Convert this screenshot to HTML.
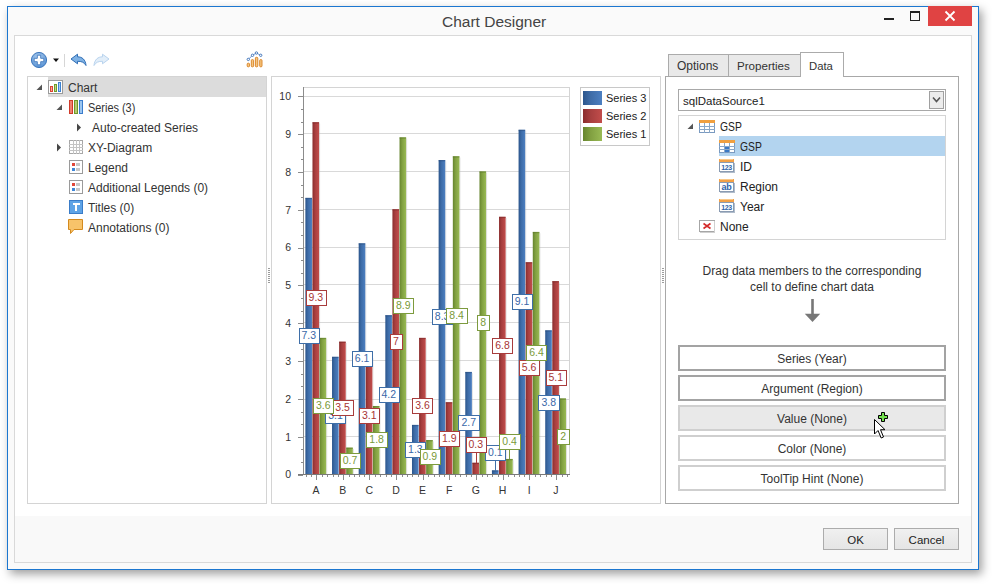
<!DOCTYPE html><html><head><meta charset="utf-8"><style>
*{box-sizing:border-box}
html,body{margin:0;padding:0;background:#fff;width:992px;height:584px;overflow:hidden;position:relative;font-family:"Liberation Sans",sans-serif;color:#333;font-size:12px}
.a{position:absolute}
.win{position:absolute;left:7px;top:6px;width:972px;height:564px;border:1px solid #1c77d0;background:#fafafa;box-shadow:3px 4px 9px rgba(0,0,0,0.38)}
.inner{position:absolute;left:14px;top:35px;width:958px;height:528px;border:1px solid #d9d9d9;background:#fff}
.t{position:absolute;white-space:nowrap;line-height:14px}
.lb{position:absolute;height:16px;border:1px solid;background:#fff;font-size:10.5px;line-height:12.5px;padding-left:2px;white-space:nowrap}
.ax{position:absolute;font-size:10.5px;line-height:14px;color:#333}
.btn{position:absolute;left:678px;width:268px;height:26px;border:2px solid #a3a3a3;background:#fff;text-align:center;line-height:24px;font-size:12px;color:#333}
</style></head><body><div class="win"></div>
<div class="inner"></div>
<div class="a" style="left:15px;top:516px;width:956px;height:46px;background:#f9f9f9"></div>
<div class="t" style="left:442px;top:13px;font-size:15.5px;line-height:18px;color:#444">Chart Designer</div>
<div class="a" style="left:884px;top:18px;width:10px;height:2px;background:#222"></div>
<div class="a" style="left:910px;top:11px;width:10px;height:10px;border:1px solid #222;border-top:2px solid #222"></div>
<div class="a" style="left:928px;top:6px;width:44px;height:20px;background:#e04343"></div>
<svg class="a" style="left:928px;top:6px" width="44" height="20"><path d="M17.5 5.5 L26.5 14.5 M26.5 5.5 L17.5 14.5" stroke="#fff" stroke-width="1.8"/></svg>
<div class="a" style="left:27px;top:76px;width:240px;height:428px;border:1px solid #d4d4d4;background:#fff"></div>
<div class="a" style="left:271px;top:76px;width:390px;height:428px;border:1px solid #d4d4d4;background:#fff"></div>
<div class="a" style="left:665px;top:76px;width:294px;height:428px;border:1px solid #a8a8a8;background:#fff"></div>
<svg class="a" style="left:30px;top:51px" width="18" height="18" shape-rendering="auto"><defs><radialGradient id="pc" cx="0.45" cy="0.35" r="0.7"><stop offset="0" stop-color="#b6d3f2"/><stop offset="1" stop-color="#4d8bd0"/></radialGradient></defs><circle cx="9" cy="9" r="7.6" fill="url(#pc)" stroke="#3f78bd" stroke-width="1"/><path d="M7.3 4.2h3.4v3.1h3.1v3.4h-3.1v3.1H7.3v-3.1H4.2V7.3h3.1z" fill="#fff" stroke="#3f78bd" stroke-width="0.9"/></svg>
<svg class="a" style="left:52px;top:57px" width="8" height="6"><path d="M1 1.5h6l-3 3.5z" fill="#111"/></svg>
<div class="a" style="left:64px;top:54px;width:1px;height:13px;background:#d6d6d6"></div>
<svg class="a" style="left:70px;top:53px" width="18" height="14" shape-rendering="auto"><path d="M1 6 L7.5 1.2 L7.5 3.8 C12 3.8 15.5 6.5 16 12.5 C14.2 9.3 11.5 8.2 7.5 8.3 L7.5 10.8 Z" fill="#7fb2e5" stroke="#2e6db5" stroke-width="1" stroke-linejoin="round"/></svg>
<svg class="a" style="left:92px;top:53px" width="18" height="14" shape-rendering="auto"><path d="M17 6 L10.5 1.2 L10.5 3.8 C6 3.8 2.5 6.5 2 12.5 C3.8 9.3 6.5 8.2 10.5 8.3 L10.5 10.8 Z" fill="#e2eef9" stroke="#b8d3ee" stroke-width="1" stroke-linejoin="round"/></svg>
<svg class="a" style="left:246px;top:51px" width="18" height="18" shape-rendering="auto"><g fill="#f6c680" stroke="#d77f1f" stroke-width="0.9"><rect x="1.2" y="12.2" width="2.3" height="3.6" rx="0.9"/><rect x="5.3" y="8.6" width="2.3" height="7.2" rx="0.9"/><rect x="9.4" y="6.3" width="2.4" height="9.5" rx="0.9"/><rect x="13.7" y="8.6" width="2.3" height="7.2" rx="0.9"/></g><path d="M2.3 8.4 L6.5 4.3 L10.4 2 L14.7 4.3" fill="none" stroke="#4b7cc2" stroke-width="0.8"/><g fill="#fff" stroke="#3a6fb8" stroke-width="0.9"><circle cx="2.3" cy="8.4" r="1.2"/><circle cx="6.5" cy="4.3" r="1.2"/><circle cx="10.4" cy="2" r="1.2"/><circle cx="14.7" cy="4.3" r="1.2"/></g></svg>
<div class="a" style="left:48px;top:77px;width:218px;height:20px;background:#dcdcdc"></div>
<svg class="a" style="left:36px;top:84px" width="7" height="7"><path d="M6 0.5 L6 6 L0.5 6 Z" fill="#555"/></svg>
<svg class="a" style="left:56px;top:104px" width="7" height="7"><path d="M6 0.5 L6 6 L0.5 6 Z" fill="#555"/></svg>
<svg class="a" style="left:76px;top:123px" width="6" height="9"><path d="M1 0.5 L5 4.5 L1 8.5 Z" fill="#444"/></svg>
<svg class="a" style="left:56px;top:143px" width="6" height="9"><path d="M1 0.5 L5 4.5 L1 8.5 Z" fill="#444"/></svg>
<svg class="a" style="left:48px;top:80px" width="15" height="14" shape-rendering="crispEdges"><rect x="0.5" y="0.5" width="14" height="13" fill="#fff" stroke="#9a9a9a"/><rect x="2.5" y="6.5" width="2" height="5" fill="#f3a99c" stroke="#dd4431"/><rect x="6.5" y="4.5" width="2" height="7" fill="#c4d48a" stroke="#6e9c2c"/><rect x="10.5" y="2.5" width="2" height="9" fill="#a9cdf2" stroke="#3c82d2"/></svg>
<svg class="a" style="left:69px;top:100px" width="15" height="14" shape-rendering="crispEdges"><rect x="0.5" y="0.5" width="3" height="13" fill="#f08070" stroke="#d03a2a"/><rect x="5.5" y="0.5" width="3" height="13" fill="#b8c870" stroke="#6f9a2a"/><rect x="10.5" y="0.5" width="3" height="13" fill="#9cc6f0" stroke="#3a7ccc"/></svg>
<svg class="a" style="left:69px;top:140px" width="14" height="14" shape-rendering="crispEdges"><rect x="0.5" y="0.5" width="13" height="13" fill="#fff" stroke="#a8a8a8"/><path d="M0 4.5H14M0 7.5H14M0 10.5H14M4.5 0V14M7.5 0V14M10.5 0V14" stroke="#c4c4c4"/></svg>
<svg class="a" style="left:69px;top:160px" width="14" height="14" shape-rendering="crispEdges"><rect x="0.5" y="0.5" width="13" height="13" fill="#fff" stroke="#9a9a9a"/><rect x="3" y="3" width="3" height="3" fill="#e0473a"/><rect x="3" y="8" width="3" height="3" fill="#3f86d6"/><rect x="7" y="3" width="4" height="3" fill="#c8c8c8"/><rect x="7" y="8" width="4" height="3" fill="#c8c8c8"/></svg>
<svg class="a" style="left:69px;top:180px" width="14" height="14" shape-rendering="crispEdges"><rect x="0.5" y="0.5" width="13" height="13" fill="#fff" stroke="#9a9a9a"/><rect x="3" y="3" width="3" height="3" fill="#e0473a"/><rect x="3" y="8" width="3" height="3" fill="#3f86d6"/><rect x="7" y="3" width="4" height="3" fill="#c8c8c8"/><rect x="7" y="8" width="4" height="3" fill="#c8c8c8"/></svg>
<svg class="a" style="left:69px;top:200px" width="14" height="14" shape-rendering="crispEdges"><rect x="0.5" y="0.5" width="13" height="13" fill="#5ea3e6" stroke="#3a7cc8"/><path d="M3.5 3.5H10.5M7 3.5V11" stroke="#fff" stroke-width="2"/></svg>
<svg class="a" style="left:68px;top:219px" width="16" height="16" shape-rendering="auto"><path d="M0.5 0.5H14.5V10.5H6L2.5 14.5V10.5H0.5Z" fill="#f7c36a" stroke="#d48a1e" stroke-linejoin="round"/></svg>
<div class="t" style="left:68px;top:80px;font-size:12px;line-height:16px;color:#333">Chart</div>
<div class="t" style="left:88px;top:100px;font-size:12px;line-height:16px;color:#333;transform:scaleX(0.91);transform-origin:0 0">Series (3)</div>
<div class="t" style="left:92px;top:120px;font-size:12px;line-height:16px;color:#333">Auto-created Series</div>
<div class="t" style="left:88px;top:140px;font-size:12px;line-height:16px;color:#333">XY-Diagram</div>
<div class="t" style="left:88px;top:160px;font-size:12px;line-height:16px;color:#333">Legend</div>
<div class="t" style="left:88px;top:180px;font-size:12px;line-height:16px;color:#333">Additional Legends (0)</div>
<div class="t" style="left:88px;top:200px;font-size:12px;line-height:16px;color:#333">Titles (0)</div>
<div class="t" style="left:88px;top:220px;font-size:12px;line-height:16px;color:#333">Annotations (0)</div>
<svg class="a" style="left:268px;top:268px" width="3" height="16" shape-rendering="crispEdges"><rect x="0" y="0" width="2" height="1" fill="#9c9c9c"/><rect x="0" y="2" width="2" height="1" fill="#9c9c9c"/><rect x="0" y="4" width="2" height="1" fill="#9c9c9c"/><rect x="0" y="6" width="2" height="1" fill="#9c9c9c"/><rect x="0" y="8" width="2" height="1" fill="#9c9c9c"/><rect x="0" y="10" width="2" height="1" fill="#9c9c9c"/><rect x="0" y="12" width="2" height="1" fill="#9c9c9c"/><rect x="0" y="14" width="2" height="1" fill="#9c9c9c"/></svg>
<svg class="a" style="left:662px;top:268px" width="3" height="16" shape-rendering="crispEdges"><rect x="0" y="0" width="2" height="1" fill="#9c9c9c"/><rect x="0" y="2" width="2" height="1" fill="#9c9c9c"/><rect x="0" y="4" width="2" height="1" fill="#9c9c9c"/><rect x="0" y="6" width="2" height="1" fill="#9c9c9c"/><rect x="0" y="8" width="2" height="1" fill="#9c9c9c"/><rect x="0" y="10" width="2" height="1" fill="#9c9c9c"/><rect x="0" y="12" width="2" height="1" fill="#9c9c9c"/><rect x="0" y="14" width="2" height="1" fill="#9c9c9c"/></svg>
<div class="a" style="left:580px;top:87px;width:70px;height:59px;border:1px solid #c8c8c8;background:#fff"></div>
<svg class="a" style="left:583px;top:91px" width="19" height="14"><rect x="0" y="0" width="19" height="14" fill="url(#gb)"/></svg>
<div class="t" style="left:606px;top:91px;font-size:11px;line-height:14px;color:#222">Series 3</div>
<svg class="a" style="left:583px;top:109px" width="19" height="14"><rect x="0" y="0" width="19" height="14" fill="url(#gr)"/></svg>
<div class="t" style="left:606px;top:109px;font-size:11px;line-height:14px;color:#222">Series 2</div>
<svg class="a" style="left:583px;top:127px" width="19" height="14"><rect x="0" y="0" width="19" height="14" fill="url(#gg)"/></svg>
<div class="t" style="left:606px;top:127px;font-size:11px;line-height:14px;color:#222">Series 1</div>
<div class="a" style="left:668px;top:54px;width:61px;height:22px;border:1px solid #ababab;border-bottom:none;background:#e9e9e9"></div>
<div class="a" style="left:728px;top:54px;width:73px;height:22px;border:1px solid #ababab;border-bottom:none;background:#e9e9e9"></div>
<div class="a" style="left:800px;top:52px;width:44px;height:25px;border:1px solid #ababab;border-bottom:none;background:#fff"></div>
<div class="t" style="left:677px;top:58px;font-size:12px;line-height:16px">Options</div>
<div class="t" style="left:737px;top:58px;font-size:11.6px;line-height:16px">Properties</div>
<div class="t" style="left:809px;top:58px;font-size:11.3px;line-height:16px">Data</div>
<div class="a" style="left:678px;top:89px;width:268px;height:22px;border:1px solid #a8a8a8;background:#fff"></div>
<div class="t" style="left:683px;top:93px;font-size:11.5px;line-height:16px;color:#222">sqlDataSource1</div>
<div class="a" style="left:929px;top:91px;width:15px;height:18px;border:1px solid #a0a0a0;background:#ececec"></div>
<svg class="a" style="left:932px;top:96px" width="9" height="8" shape-rendering="auto"><path d="M1 1.5 L4.5 5.5 L8 1.5" fill="none" stroke="#555" stroke-width="1.6"/></svg>
<div class="a" style="left:678px;top:115px;width:268px;height:125px;border:1px solid #d4d4d4;background:#fff"></div>
<div class="a" style="left:719px;top:136px;width:226px;height:20px;background:#b3d4ef"></div>
<svg class="a" style="left:687px;top:123px" width="7" height="7"><path d="M6 0.5 L6 6 L0.5 6 Z" fill="#555"/></svg>
<svg class="a" style="left:699px;top:120px" width="16" height="13" shape-rendering="crispEdges"><rect x="0.5" y="0.5" width="15" height="12" fill="#fff" stroke="#7a9ac0"/><rect x="0" y="0" width="16" height="3" fill="#f0a040"/><path d="M0 6.5H16M0 9.5H16M5.5 3V13M10.5 3V13" stroke="#8aa8c8"/></svg>
<svg class="a" style="left:719px;top:140px" width="16" height="13" shape-rendering="crispEdges"><rect x="0.5" y="0.5" width="15" height="12" fill="#fff" stroke="#7a9ac0"/><rect x="0" y="0" width="16" height="3" fill="#f0a040"/><path d="M0 6.5H16M0 9.5H16M5.5 3V13M10.5 3V13" stroke="#8aa8c8"/><rect x="6" y="7" width="4" height="2" fill="#3a78c4"/><rect x="6" y="10" width="4" height="2" fill="#3a78c4"/></svg>
<svg class="a" style="left:719px;top:159px" width="16" height="14" shape-rendering="crispEdges"><rect x="0.5" y="3.5" width="14" height="9" fill="#fff" stroke="#8a9bb2"/><path d="M1 13.5H16M15.5 4V14" stroke="#b0bccb"/><rect x="0" y="0" width="15" height="3" fill="#f3a146"/><rect x="1" y="0" width="13" height="1" fill="#f9c98a"/><text x="7.5" y="11.2" font-family="Liberation Sans" font-weight="bold" font-size="7" letter-spacing="-0.4" text-anchor="middle" fill="#2e64ab" shape-rendering="auto">123</text></svg>
<svg class="a" style="left:719px;top:179px" width="16" height="14" shape-rendering="crispEdges"><rect x="0.5" y="3.5" width="14" height="9" fill="#fff" stroke="#8a9bb2"/><path d="M1 13.5H16M15.5 4V14" stroke="#b0bccb"/><rect x="0" y="0" width="15" height="3" fill="#f3a146"/><rect x="1" y="0" width="13" height="1" fill="#f9c98a"/><text x="7.5" y="11.2" font-family="Liberation Sans" font-weight="bold" font-size="9" letter-spacing="-0.2" text-anchor="middle" fill="#2e64ab" shape-rendering="auto">ab</text></svg>
<svg class="a" style="left:719px;top:199px" width="16" height="14" shape-rendering="crispEdges"><rect x="0.5" y="3.5" width="14" height="9" fill="#fff" stroke="#8a9bb2"/><path d="M1 13.5H16M15.5 4V14" stroke="#b0bccb"/><rect x="0" y="0" width="15" height="3" fill="#f3a146"/><rect x="1" y="0" width="13" height="1" fill="#f9c98a"/><text x="7.5" y="11.2" font-family="Liberation Sans" font-weight="bold" font-size="7" letter-spacing="-0.4" text-anchor="middle" fill="#2e64ab" shape-rendering="auto">123</text></svg>
<svg class="a" style="left:699px;top:220px" width="16" height="13" shape-rendering="crispEdges"><rect x="0.5" y="0.5" width="15" height="11" fill="#fff" stroke="#a6a6a6"/><path d="M1 12.5H16M15.5 1V13" stroke="#d0d0d0"/><path d="M4.5 3.5 L11.5 8.5 M11.5 3.5 L4.5 8.5" stroke="#d42a2a" stroke-width="1.6" shape-rendering="auto"/></svg>
<div class="t" style="left:740px;top:159px;font-size:12px;line-height:16px;color:#222">ID</div>
<div class="t" style="left:740px;top:179px;font-size:12px;line-height:16px;color:#222">Region</div>
<div class="t" style="left:740px;top:199px;font-size:12px;line-height:16px;color:#222">Year</div>
<div class="t" style="left:720px;top:219px;font-size:12px;line-height:16px;color:#222">None</div>
<div class="t" style="left:720px;top:119px;font-size:12px;line-height:16px;color:#222;transform:scaleX(0.86);transform-origin:0 0">GSP</div>
<div class="t" style="left:740px;top:139px;font-size:12px;line-height:16px;color:#222;transform:scaleX(0.86);transform-origin:0 0">GSP</div>
<div class="t" style="left:678px;top:263px;width:268px;text-align:center;font-size:12px;line-height:16px;color:#333">Drag data members to the corresponding<br>cell to define chart data</div>
<svg class="a" style="left:804px;top:299px" width="17" height="24" shape-rendering="auto"><path d="M8.5 0 V16" stroke="#777" stroke-width="2.6"/><path d="M0.8 14.8 L16.2 14.8 L8.5 23 Z" fill="#777"/></svg>
<div class="btn" style="top:345px;border-color:#a3a3a3;background:#fff">Series (Year)</div>
<div class="btn" style="top:375px;border-color:#a3a3a3;background:#fff">Argument (Region)</div>
<div class="btn" style="top:405px;border-color:#cfcfcf;background:#e9e9e9">Value (None)</div>
<div class="btn" style="top:435px;border-color:#cfcfcf;background:#fff">Color (None)</div>
<div class="btn" style="top:465px;border-color:#cfcfcf;background:#fff">ToolTip Hint (None)</div>
<svg class="a" style="left:872px;top:410px" width="20" height="30" shape-rendering="auto"><path d="M2.5 9.5 L2.5 24 L6 20.5 L9.2 28 L11.5 27 L8.5 19.7 L13 19.7 Z" fill="#fff" stroke="#000" stroke-width="1" stroke-linejoin="miter"/><path d="M9.5 2.5 H12.5 V5.5 H15.5 V8.5 H12.5 V11.5 H9.5 V8.5 H6.5 V5.5 H9.5 Z" fill="#74e050" stroke="#000" stroke-width="1"/></svg>
<div class="a" style="left:823px;top:528px;width:65px;height:22px;border:1px solid #acacac;background:linear-gradient(#f0f0f0,#e5e5e5);text-align:center;line-height:22px;font-size:11.5px;color:#222">OK</div>
<div class="a" style="left:894px;top:528px;width:65px;height:22px;border:1px solid #acacac;background:linear-gradient(#f0f0f0,#e5e5e5);text-align:center;line-height:22px;font-size:11.5px;color:#222">Cancel</div><svg style="position:absolute;left:0;top:0" width="992" height="584" viewBox="0 0 992 584" shape-rendering="crispEdges">
<defs>
<linearGradient id="gb" x1="0" x2="1" y1="0" y2="0"><stop offset="0" stop-color="#2b558c"/><stop offset="0.4" stop-color="#3e6ca7"/><stop offset="1" stop-color="#4c7fc1"/></linearGradient>
<linearGradient id="gr" x1="0" x2="1" y1="0" y2="0"><stop offset="0" stop-color="#8a2d2d"/><stop offset="0.4" stop-color="#a73f3f"/><stop offset="1" stop-color="#c24d4b"/></linearGradient>
<linearGradient id="gg" x1="0" x2="1" y1="0" y2="0"><stop offset="0" stop-color="#66852e"/><stop offset="0.4" stop-color="#81a041"/><stop offset="1" stop-color="#99ba54"/></linearGradient>
</defs>
<line x1="304.2" x2="569.7" y1="436.5" y2="436.5" stroke="#d9d9d9" stroke-width="1"/>
<line x1="304.2" x2="569.7" y1="399.5" y2="399.5" stroke="#d9d9d9" stroke-width="1"/>
<line x1="304.2" x2="569.7" y1="360.5" y2="360.5" stroke="#d9d9d9" stroke-width="1"/>
<line x1="304.2" x2="569.7" y1="322.5" y2="322.5" stroke="#d9d9d9" stroke-width="1"/>
<line x1="304.2" x2="569.7" y1="284.5" y2="284.5" stroke="#d9d9d9" stroke-width="1"/>
<line x1="304.2" x2="569.7" y1="247.5" y2="247.5" stroke="#d9d9d9" stroke-width="1"/>
<line x1="304.2" x2="569.7" y1="209.5" y2="209.5" stroke="#d9d9d9" stroke-width="1"/>
<line x1="304.2" x2="569.7" y1="171.5" y2="171.5" stroke="#d9d9d9" stroke-width="1"/>
<line x1="304.2" x2="569.7" y1="133.5" y2="133.5" stroke="#d9d9d9" stroke-width="1"/>
<line x1="304.2" x2="569.7" y1="96.5" y2="96.5" stroke="#d9d9d9" stroke-width="1"/>
<line x1="303.2" x2="570.2" y1="87.5" y2="87.5" stroke="#d4d4d4"/>
<line x1="569.5" x2="569.5" y1="87" y2="474.4" stroke="#d4d4d4"/>
<rect x="311.98" y="199.17" width="1" height="275.23" fill="#bdbdbd" opacity="0.45" shape-rendering="auto"/>
<rect x="305.38" y="197.87" width="6.6" height="276.53" fill="url(#gb)" shape-rendering="auto"/>
<rect x="305.38" y="197.87" width="6.6" height="1.3" fill="#2a4f80" opacity="0.55" shape-rendering="auto"/>
<rect x="319.08" y="123.49" width="1" height="350.91" fill="#bdbdbd" opacity="0.45" shape-rendering="auto"/>
<rect x="312.48" y="122.19" width="6.6" height="352.21" fill="url(#gr)" shape-rendering="auto"/>
<rect x="312.48" y="122.19" width="6.6" height="1.3" fill="#7c2828" opacity="0.55" shape-rendering="auto"/>
<rect x="326.18" y="339.18" width="1" height="135.22" fill="#bdbdbd" opacity="0.45" shape-rendering="auto"/>
<rect x="319.57" y="337.88" width="6.6" height="136.52" fill="url(#gg)" shape-rendering="auto"/>
<rect x="319.57" y="337.88" width="6.6" height="1.3" fill="#5c7a2a" opacity="0.55" shape-rendering="auto"/>
<rect x="338.63" y="358.10" width="1" height="116.30" fill="#bdbdbd" opacity="0.45" shape-rendering="auto"/>
<rect x="332.03" y="356.80" width="6.6" height="117.60" fill="url(#gb)" shape-rendering="auto"/>
<rect x="332.03" y="356.80" width="6.6" height="1.3" fill="#2a4f80" opacity="0.55" shape-rendering="auto"/>
<rect x="345.73" y="342.96" width="1" height="131.44" fill="#bdbdbd" opacity="0.45" shape-rendering="auto"/>
<rect x="339.13" y="341.66" width="6.6" height="132.74" fill="url(#gr)" shape-rendering="auto"/>
<rect x="339.13" y="341.66" width="6.6" height="1.3" fill="#7c2828" opacity="0.55" shape-rendering="auto"/>
<rect x="352.83" y="448.91" width="1" height="25.49" fill="#bdbdbd" opacity="0.45" shape-rendering="auto"/>
<rect x="346.23" y="447.61" width="6.6" height="26.79" fill="url(#gg)" shape-rendering="auto"/>
<rect x="346.23" y="447.61" width="6.6" height="1.3" fill="#5c7a2a" opacity="0.55" shape-rendering="auto"/>
<rect x="365.28" y="244.58" width="1" height="229.82" fill="#bdbdbd" opacity="0.45" shape-rendering="auto"/>
<rect x="358.68" y="243.28" width="6.6" height="231.12" fill="url(#gb)" shape-rendering="auto"/>
<rect x="358.68" y="243.28" width="6.6" height="1.3" fill="#2a4f80" opacity="0.55" shape-rendering="auto"/>
<rect x="372.38" y="358.10" width="1" height="116.30" fill="#bdbdbd" opacity="0.45" shape-rendering="auto"/>
<rect x="365.78" y="356.80" width="6.6" height="117.60" fill="url(#gr)" shape-rendering="auto"/>
<rect x="365.78" y="356.80" width="6.6" height="1.3" fill="#7c2828" opacity="0.55" shape-rendering="auto"/>
<rect x="379.48" y="407.29" width="1" height="67.11" fill="#bdbdbd" opacity="0.45" shape-rendering="auto"/>
<rect x="372.88" y="405.99" width="6.6" height="68.41" fill="url(#gg)" shape-rendering="auto"/>
<rect x="372.88" y="405.99" width="6.6" height="1.3" fill="#5c7a2a" opacity="0.55" shape-rendering="auto"/>
<rect x="391.93" y="316.47" width="1" height="157.93" fill="#bdbdbd" opacity="0.45" shape-rendering="auto"/>
<rect x="385.33" y="315.17" width="6.6" height="159.23" fill="url(#gb)" shape-rendering="auto"/>
<rect x="385.33" y="315.17" width="6.6" height="1.3" fill="#2a4f80" opacity="0.55" shape-rendering="auto"/>
<rect x="399.03" y="210.52" width="1" height="263.88" fill="#bdbdbd" opacity="0.45" shape-rendering="auto"/>
<rect x="392.43" y="209.22" width="6.6" height="265.18" fill="url(#gr)" shape-rendering="auto"/>
<rect x="392.43" y="209.22" width="6.6" height="1.3" fill="#7c2828" opacity="0.55" shape-rendering="auto"/>
<rect x="406.13" y="138.62" width="1" height="335.78" fill="#bdbdbd" opacity="0.45" shape-rendering="auto"/>
<rect x="399.53" y="137.32" width="6.6" height="337.08" fill="url(#gg)" shape-rendering="auto"/>
<rect x="399.53" y="137.32" width="6.6" height="1.3" fill="#5c7a2a" opacity="0.55" shape-rendering="auto"/>
<rect x="418.58" y="426.21" width="1" height="48.19" fill="#bdbdbd" opacity="0.45" shape-rendering="auto"/>
<rect x="411.98" y="424.91" width="6.6" height="49.49" fill="url(#gb)" shape-rendering="auto"/>
<rect x="411.98" y="424.91" width="6.6" height="1.3" fill="#2a4f80" opacity="0.55" shape-rendering="auto"/>
<rect x="425.68" y="339.18" width="1" height="135.22" fill="#bdbdbd" opacity="0.45" shape-rendering="auto"/>
<rect x="419.08" y="337.88" width="6.6" height="136.52" fill="url(#gr)" shape-rendering="auto"/>
<rect x="419.08" y="337.88" width="6.6" height="1.3" fill="#7c2828" opacity="0.55" shape-rendering="auto"/>
<rect x="432.78" y="441.34" width="1" height="33.06" fill="#bdbdbd" opacity="0.45" shape-rendering="auto"/>
<rect x="426.18" y="440.04" width="6.6" height="34.36" fill="url(#gg)" shape-rendering="auto"/>
<rect x="426.18" y="440.04" width="6.6" height="1.3" fill="#5c7a2a" opacity="0.55" shape-rendering="auto"/>
<rect x="445.23" y="161.33" width="1" height="313.07" fill="#bdbdbd" opacity="0.45" shape-rendering="auto"/>
<rect x="438.63" y="160.03" width="6.6" height="314.37" fill="url(#gb)" shape-rendering="auto"/>
<rect x="438.63" y="160.03" width="6.6" height="1.3" fill="#2a4f80" opacity="0.55" shape-rendering="auto"/>
<rect x="452.33" y="403.50" width="1" height="70.90" fill="#bdbdbd" opacity="0.45" shape-rendering="auto"/>
<rect x="445.73" y="402.20" width="6.6" height="72.20" fill="url(#gr)" shape-rendering="auto"/>
<rect x="445.73" y="402.20" width="6.6" height="1.3" fill="#7c2828" opacity="0.55" shape-rendering="auto"/>
<rect x="459.43" y="157.54" width="1" height="316.86" fill="#bdbdbd" opacity="0.45" shape-rendering="auto"/>
<rect x="452.83" y="156.24" width="6.6" height="318.16" fill="url(#gg)" shape-rendering="auto"/>
<rect x="452.83" y="156.24" width="6.6" height="1.3" fill="#5c7a2a" opacity="0.55" shape-rendering="auto"/>
<rect x="471.88" y="373.23" width="1" height="101.17" fill="#bdbdbd" opacity="0.45" shape-rendering="auto"/>
<rect x="465.28" y="371.93" width="6.6" height="102.47" fill="url(#gb)" shape-rendering="auto"/>
<rect x="465.28" y="371.93" width="6.6" height="1.3" fill="#2a4f80" opacity="0.55" shape-rendering="auto"/>
<rect x="478.98" y="464.05" width="1" height="10.35" fill="#bdbdbd" opacity="0.45" shape-rendering="auto"/>
<rect x="472.38" y="462.75" width="6.6" height="11.65" fill="url(#gr)" shape-rendering="auto"/>
<rect x="472.38" y="462.75" width="6.6" height="1.3" fill="#7c2828" opacity="0.55" shape-rendering="auto"/>
<rect x="486.08" y="172.68" width="1" height="301.72" fill="#bdbdbd" opacity="0.45" shape-rendering="auto"/>
<rect x="479.48" y="171.38" width="6.6" height="303.02" fill="url(#gg)" shape-rendering="auto"/>
<rect x="479.48" y="171.38" width="6.6" height="1.3" fill="#5c7a2a" opacity="0.55" shape-rendering="auto"/>
<rect x="498.53" y="471.62" width="1" height="2.78" fill="#bdbdbd" opacity="0.45" shape-rendering="auto"/>
<rect x="491.93" y="470.32" width="6.6" height="4.08" fill="url(#gb)" shape-rendering="auto"/>
<rect x="491.93" y="470.32" width="6.6" height="1.3" fill="#2a4f80" opacity="0.55" shape-rendering="auto"/>
<rect x="505.63" y="218.09" width="1" height="256.31" fill="#bdbdbd" opacity="0.45" shape-rendering="auto"/>
<rect x="499.03" y="216.79" width="6.6" height="257.61" fill="url(#gr)" shape-rendering="auto"/>
<rect x="499.03" y="216.79" width="6.6" height="1.3" fill="#7c2828" opacity="0.55" shape-rendering="auto"/>
<rect x="512.73" y="460.26" width="1" height="14.14" fill="#bdbdbd" opacity="0.45" shape-rendering="auto"/>
<rect x="506.13" y="458.96" width="6.6" height="15.44" fill="url(#gg)" shape-rendering="auto"/>
<rect x="506.13" y="458.96" width="6.6" height="1.3" fill="#5c7a2a" opacity="0.55" shape-rendering="auto"/>
<rect x="525.18" y="131.06" width="1" height="343.34" fill="#bdbdbd" opacity="0.45" shape-rendering="auto"/>
<rect x="518.58" y="129.76" width="6.6" height="344.64" fill="url(#gb)" shape-rendering="auto"/>
<rect x="518.58" y="129.76" width="6.6" height="1.3" fill="#2a4f80" opacity="0.55" shape-rendering="auto"/>
<rect x="532.28" y="263.50" width="1" height="210.90" fill="#bdbdbd" opacity="0.45" shape-rendering="auto"/>
<rect x="525.68" y="262.20" width="6.6" height="212.20" fill="url(#gr)" shape-rendering="auto"/>
<rect x="525.68" y="262.20" width="6.6" height="1.3" fill="#7c2828" opacity="0.55" shape-rendering="auto"/>
<rect x="539.38" y="233.22" width="1" height="241.18" fill="#bdbdbd" opacity="0.45" shape-rendering="auto"/>
<rect x="532.78" y="231.92" width="6.6" height="242.48" fill="url(#gg)" shape-rendering="auto"/>
<rect x="532.78" y="231.92" width="6.6" height="1.3" fill="#5c7a2a" opacity="0.55" shape-rendering="auto"/>
<rect x="551.83" y="331.61" width="1" height="142.79" fill="#bdbdbd" opacity="0.45" shape-rendering="auto"/>
<rect x="545.23" y="330.31" width="6.6" height="144.09" fill="url(#gb)" shape-rendering="auto"/>
<rect x="545.23" y="330.31" width="6.6" height="1.3" fill="#2a4f80" opacity="0.55" shape-rendering="auto"/>
<rect x="558.93" y="282.42" width="1" height="191.98" fill="#bdbdbd" opacity="0.45" shape-rendering="auto"/>
<rect x="552.33" y="281.12" width="6.6" height="193.28" fill="url(#gr)" shape-rendering="auto"/>
<rect x="552.33" y="281.12" width="6.6" height="1.3" fill="#7c2828" opacity="0.55" shape-rendering="auto"/>
<rect x="566.03" y="399.72" width="1" height="74.68" fill="#bdbdbd" opacity="0.45" shape-rendering="auto"/>
<rect x="559.43" y="398.42" width="6.6" height="75.98" fill="url(#gg)" shape-rendering="auto"/>
<rect x="559.43" y="398.42" width="6.6" height="1.3" fill="#5c7a2a" opacity="0.55" shape-rendering="auto"/>
<line x1="303.5" x2="303.5" y1="87" y2="475" stroke="#8c8c8c"/>
<line x1="298" x2="570" y1="474.5" y2="474.5" stroke="#7a7a7a"/>
<line x1="298" x2="303" y1="475.5" y2="475.5" stroke="#8c8c8c"/>
<line x1="301" x2="303" y1="462.5" y2="462.5" stroke="#8c8c8c"/>
<line x1="301" x2="303" y1="449.5" y2="449.5" stroke="#8c8c8c"/>
<line x1="298" x2="303" y1="437.5" y2="437.5" stroke="#8c8c8c"/>
<line x1="301" x2="303" y1="424.5" y2="424.5" stroke="#8c8c8c"/>
<line x1="301" x2="303" y1="412.5" y2="412.5" stroke="#8c8c8c"/>
<line x1="298" x2="303" y1="399.5" y2="399.5" stroke="#8c8c8c"/>
<line x1="301" x2="303" y1="386.5" y2="386.5" stroke="#8c8c8c"/>
<line x1="301" x2="303" y1="374.5" y2="374.5" stroke="#8c8c8c"/>
<line x1="298" x2="303" y1="361.5" y2="361.5" stroke="#8c8c8c"/>
<line x1="301" x2="303" y1="349.5" y2="349.5" stroke="#8c8c8c"/>
<line x1="301" x2="303" y1="336.5" y2="336.5" stroke="#8c8c8c"/>
<line x1="298" x2="303" y1="323.5" y2="323.5" stroke="#8c8c8c"/>
<line x1="301" x2="303" y1="311.5" y2="311.5" stroke="#8c8c8c"/>
<line x1="301" x2="303" y1="298.5" y2="298.5" stroke="#8c8c8c"/>
<line x1="298" x2="303" y1="285.5" y2="285.5" stroke="#8c8c8c"/>
<line x1="301" x2="303" y1="273.5" y2="273.5" stroke="#8c8c8c"/>
<line x1="301" x2="303" y1="260.5" y2="260.5" stroke="#8c8c8c"/>
<line x1="298" x2="303" y1="248.5" y2="248.5" stroke="#8c8c8c"/>
<line x1="301" x2="303" y1="235.5" y2="235.5" stroke="#8c8c8c"/>
<line x1="301" x2="303" y1="222.5" y2="222.5" stroke="#8c8c8c"/>
<line x1="298" x2="303" y1="210.5" y2="210.5" stroke="#8c8c8c"/>
<line x1="301" x2="303" y1="197.5" y2="197.5" stroke="#8c8c8c"/>
<line x1="301" x2="303" y1="185.5" y2="185.5" stroke="#8c8c8c"/>
<line x1="298" x2="303" y1="172.5" y2="172.5" stroke="#8c8c8c"/>
<line x1="301" x2="303" y1="159.5" y2="159.5" stroke="#8c8c8c"/>
<line x1="301" x2="303" y1="147.5" y2="147.5" stroke="#8c8c8c"/>
<line x1="298" x2="303" y1="134.5" y2="134.5" stroke="#8c8c8c"/>
<line x1="301" x2="303" y1="122.5" y2="122.5" stroke="#8c8c8c"/>
<line x1="301" x2="303" y1="109.5" y2="109.5" stroke="#8c8c8c"/>
<line x1="298" x2="303" y1="96.5" y2="96.5" stroke="#8c8c8c"/>
<line x1="316.5" x2="316.5" y1="475" y2="480" stroke="#8c8c8c"/>
<line x1="306.5" x2="306.5" y1="475" y2="477" stroke="#8c8c8c"/>
<line x1="311.5" x2="311.5" y1="475" y2="477" stroke="#8c8c8c"/>
<line x1="322.5" x2="322.5" y1="475" y2="477" stroke="#8c8c8c"/>
<line x1="327.5" x2="327.5" y1="475" y2="477" stroke="#8c8c8c"/>
<line x1="343.5" x2="343.5" y1="475" y2="480" stroke="#8c8c8c"/>
<line x1="333.5" x2="333.5" y1="475" y2="477" stroke="#8c8c8c"/>
<line x1="338.5" x2="338.5" y1="475" y2="477" stroke="#8c8c8c"/>
<line x1="349.5" x2="349.5" y1="475" y2="477" stroke="#8c8c8c"/>
<line x1="354.5" x2="354.5" y1="475" y2="477" stroke="#8c8c8c"/>
<line x1="369.5" x2="369.5" y1="475" y2="480" stroke="#8c8c8c"/>
<line x1="359.5" x2="359.5" y1="475" y2="477" stroke="#8c8c8c"/>
<line x1="364.5" x2="364.5" y1="475" y2="477" stroke="#8c8c8c"/>
<line x1="375.5" x2="375.5" y1="475" y2="477" stroke="#8c8c8c"/>
<line x1="380.5" x2="380.5" y1="475" y2="477" stroke="#8c8c8c"/>
<line x1="396.5" x2="396.5" y1="475" y2="480" stroke="#8c8c8c"/>
<line x1="386.5" x2="386.5" y1="475" y2="477" stroke="#8c8c8c"/>
<line x1="391.5" x2="391.5" y1="475" y2="477" stroke="#8c8c8c"/>
<line x1="402.5" x2="402.5" y1="475" y2="477" stroke="#8c8c8c"/>
<line x1="407.5" x2="407.5" y1="475" y2="477" stroke="#8c8c8c"/>
<line x1="423.5" x2="423.5" y1="475" y2="480" stroke="#8c8c8c"/>
<line x1="412.5" x2="412.5" y1="475" y2="477" stroke="#8c8c8c"/>
<line x1="418.5" x2="418.5" y1="475" y2="477" stroke="#8c8c8c"/>
<line x1="428.5" x2="428.5" y1="475" y2="477" stroke="#8c8c8c"/>
<line x1="434.5" x2="434.5" y1="475" y2="477" stroke="#8c8c8c"/>
<line x1="449.5" x2="449.5" y1="475" y2="480" stroke="#8c8c8c"/>
<line x1="439.5" x2="439.5" y1="475" y2="477" stroke="#8c8c8c"/>
<line x1="444.5" x2="444.5" y1="475" y2="477" stroke="#8c8c8c"/>
<line x1="455.5" x2="455.5" y1="475" y2="477" stroke="#8c8c8c"/>
<line x1="460.5" x2="460.5" y1="475" y2="477" stroke="#8c8c8c"/>
<line x1="476.5" x2="476.5" y1="475" y2="480" stroke="#8c8c8c"/>
<line x1="466.5" x2="466.5" y1="475" y2="477" stroke="#8c8c8c"/>
<line x1="471.5" x2="471.5" y1="475" y2="477" stroke="#8c8c8c"/>
<line x1="482.5" x2="482.5" y1="475" y2="477" stroke="#8c8c8c"/>
<line x1="487.5" x2="487.5" y1="475" y2="477" stroke="#8c8c8c"/>
<line x1="503.5" x2="503.5" y1="475" y2="480" stroke="#8c8c8c"/>
<line x1="492.5" x2="492.5" y1="475" y2="477" stroke="#8c8c8c"/>
<line x1="498.5" x2="498.5" y1="475" y2="477" stroke="#8c8c8c"/>
<line x1="508.5" x2="508.5" y1="475" y2="477" stroke="#8c8c8c"/>
<line x1="514.5" x2="514.5" y1="475" y2="477" stroke="#8c8c8c"/>
<line x1="529.5" x2="529.5" y1="475" y2="480" stroke="#8c8c8c"/>
<line x1="519.5" x2="519.5" y1="475" y2="477" stroke="#8c8c8c"/>
<line x1="524.5" x2="524.5" y1="475" y2="477" stroke="#8c8c8c"/>
<line x1="535.5" x2="535.5" y1="475" y2="477" stroke="#8c8c8c"/>
<line x1="540.5" x2="540.5" y1="475" y2="477" stroke="#8c8c8c"/>
<line x1="556.5" x2="556.5" y1="475" y2="480" stroke="#8c8c8c"/>
<line x1="546.5" x2="546.5" y1="475" y2="477" stroke="#8c8c8c"/>
<line x1="551.5" x2="551.5" y1="475" y2="477" stroke="#8c8c8c"/>
<line x1="562.5" x2="562.5" y1="475" y2="477" stroke="#8c8c8c"/>
<line x1="567.5" x2="567.5" y1="475" y2="477" stroke="#8c8c8c"/>
</svg>
<div class="lb" style="left:298.5px;top:328.3px;width:21.3px;border-color:#3f6fa8;color:#3a68a8">7.3</div>
<div class="lb" style="left:325.2px;top:407.7px;width:21.3px;border-color:#3f6fa8;color:#3a68a8">3.1</div>
<div class="lb" style="left:351.8px;top:351.0px;width:21.3px;border-color:#3f6fa8;color:#3a68a8">6.1</div>
<div class="lb" style="left:378.5px;top:386.9px;width:21.3px;border-color:#3f6fa8;color:#3a68a8">4.2</div>
<div class="lb" style="left:405.1px;top:441.8px;width:21.3px;border-color:#3f6fa8;color:#3a68a8">1.3</div>
<div class="lb" style="left:431.8px;top:309.4px;width:21.3px;border-color:#3f6fa8;color:#3a68a8">8.3</div>
<div class="lb" style="left:458.4px;top:415.3px;width:21.3px;border-color:#3f6fa8;color:#3a68a8">2.7</div>
<div style="position:absolute;left:495px;top:461.0px;width:1px;height:9.6px;background:#3f6fa8"></div>
<div class="lb" style="left:485.1px;top:445.0px;width:21.3px;border-color:#3f6fa8;color:#3a68a8">0.1</div>
<div class="lb" style="left:511.7px;top:294.2px;width:21.3px;border-color:#3f6fa8;color:#3a68a8">9.1</div>
<div class="lb" style="left:538.4px;top:394.5px;width:21.3px;border-color:#3f6fa8;color:#3a68a8">3.8</div>
<div class="lb" style="left:305.6px;top:290.4px;width:21.3px;border-color:#a83c3c;color:#a83434">9.3</div>
<div class="lb" style="left:332.3px;top:400.2px;width:21.3px;border-color:#a83c3c;color:#a83434">3.5</div>
<div class="lb" style="left:358.9px;top:407.7px;width:21.3px;border-color:#a83c3c;color:#a83434">3.1</div>
<div class="lb" style="left:389.9px;top:334.0px;width:12.7px;border-color:#a83c3c;color:#a83434">7</div>
<div class="lb" style="left:412.2px;top:398.3px;width:21.3px;border-color:#a83c3c;color:#a83434">3.6</div>
<div class="lb" style="left:438.9px;top:430.5px;width:21.3px;border-color:#a83c3c;color:#a83434">1.9</div>
<div style="position:absolute;left:476px;top:453.4px;width:1px;height:9.6px;background:#a83c3c"></div>
<div class="lb" style="left:465.5px;top:437.4px;width:21.3px;border-color:#a83c3c;color:#a83434">0.3</div>
<div class="lb" style="left:492.2px;top:337.7px;width:21.3px;border-color:#a83c3c;color:#a83434">6.8</div>
<div class="lb" style="left:518.8px;top:360.4px;width:21.3px;border-color:#a83c3c;color:#a83434">5.6</div>
<div class="lb" style="left:545.5px;top:369.9px;width:21.3px;border-color:#a83c3c;color:#a83434">5.1</div>
<div class="lb" style="left:313.0px;top:398.3px;width:21.3px;border-color:#7d9b3e;color:#7a9a38">3.6</div>
<div class="lb" style="left:339.7px;top:453.2px;width:21.3px;border-color:#7d9b3e;color:#7a9a38">0.7</div>
<div class="lb" style="left:366.3px;top:432.3px;width:21.3px;border-color:#7d9b3e;color:#7a9a38">1.8</div>
<div class="lb" style="left:393.0px;top:298.0px;width:21.3px;border-color:#7d9b3e;color:#7a9a38">8.9</div>
<div class="lb" style="left:419.6px;top:449.4px;width:21.3px;border-color:#7d9b3e;color:#7a9a38">0.9</div>
<div class="lb" style="left:446.3px;top:307.5px;width:21.3px;border-color:#7d9b3e;color:#7a9a38">8.4</div>
<div class="lb" style="left:477.2px;top:315.0px;width:12.7px;border-color:#7d9b3e;color:#7a9a38">8</div>
<div style="position:absolute;left:509px;top:449.7px;width:1px;height:9.6px;background:#7d9b3e"></div>
<div class="lb" style="left:499.3px;top:433.7px;width:21.3px;border-color:#7d9b3e;color:#7a9a38">0.4</div>
<div class="lb" style="left:526.2px;top:345.3px;width:21.3px;border-color:#7d9b3e;color:#7a9a38">6.4</div>
<div class="lb" style="left:557.2px;top:428.6px;width:12.7px;border-color:#7d9b3e;color:#7a9a38">2</div>
<div class="ax" style="left:260px;top:467.4px;width:31px;text-align:right">0</div>
<div class="ax" style="left:260px;top:429.6px;width:31px;text-align:right">1</div>
<div class="ax" style="left:260px;top:391.7px;width:31px;text-align:right">2</div>
<div class="ax" style="left:260px;top:353.9px;width:31px;text-align:right">3</div>
<div class="ax" style="left:260px;top:316.0px;width:31px;text-align:right">4</div>
<div class="ax" style="left:260px;top:278.2px;width:31px;text-align:right">5</div>
<div class="ax" style="left:260px;top:240.4px;width:31px;text-align:right">6</div>
<div class="ax" style="left:260px;top:202.5px;width:31px;text-align:right">7</div>
<div class="ax" style="left:260px;top:164.7px;width:31px;text-align:right">8</div>
<div class="ax" style="left:260px;top:126.8px;width:31px;text-align:right">9</div>
<div class="ax" style="left:260px;top:89.0px;width:31px;text-align:right">10</div>
<div class="ax" style="left:306.0px;top:483px;width:20px;text-align:center">A</div>
<div class="ax" style="left:332.7px;top:483px;width:20px;text-align:center">B</div>
<div class="ax" style="left:359.3px;top:483px;width:20px;text-align:center">C</div>
<div class="ax" style="left:386.0px;top:483px;width:20px;text-align:center">D</div>
<div class="ax" style="left:412.6px;top:483px;width:20px;text-align:center">E</div>
<div class="ax" style="left:439.3px;top:483px;width:20px;text-align:center">F</div>
<div class="ax" style="left:465.9px;top:483px;width:20px;text-align:center">G</div>
<div class="ax" style="left:492.6px;top:483px;width:20px;text-align:center">H</div>
<div class="ax" style="left:519.2px;top:483px;width:20px;text-align:center">I</div>
<div class="ax" style="left:545.9px;top:483px;width:20px;text-align:center">J</div></body></html>
